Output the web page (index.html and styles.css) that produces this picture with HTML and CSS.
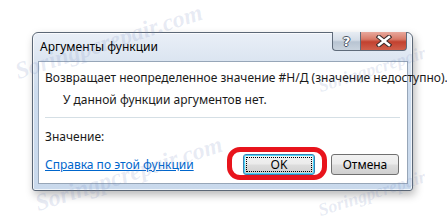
FILE: index.html
```html
<!DOCTYPE html>
<html lang="ru">
<head>
<meta charset="utf-8">
<title>Аргументы функции</title>
<link rel="stylesheet" href="styles.css">
</head>
<body>
<div class="stage">
  <div class="dialog">
    <div class="titlebar">
      <span class="title">Аргументы функции</span>
      <div class="caption-btns">
        <div class="cb help"><span class="qmark">?</span></div>
        <div class="cb close">
          <svg width="16" height="12" viewBox="0 0 16 12" aria-hidden="true">
            <path d="M3 2 L13 10 M13 2 L3 10" stroke="#3a2a2a" stroke-width="4.6" stroke-linecap="square" fill="none"/>
            <path d="M3 2 L13 10 M13 2 L3 10" stroke="#ffffff" stroke-width="2.6" stroke-linecap="square" fill="none"/>
          </svg>
        </div>
      </div>
    </div>
    <div class="client">
      <p class="desc">Возвращает неопределенное значение #Н/Д (значение недоступно).</p>
      <p class="noargs">У данной функции аргументов нет.</p>
      <div class="sep"></div>
      <p class="value">Значение:</p>
      <div class="footer">
        <a class="help-link" href="#">Справка по этой функции</a>
        <div class="btns">
          <button class="btn ok" type="button"><span class="focus">OK</span></button>
          <button class="btn cancel" type="button">Отмена</button>
        </div>
      </div>
    </div>
  </div>
  <div class="highlight"></div>
  <span class="wm wm1">Soringpcrepair.com</span>
  <span class="wm wm2 wm-small">Soringpcrepair</span>
  <span class="wm wm3">Soringpcrepair.com</span>
  <span class="wm wm4 wm-small">Soringpcrepair</span>
</div>
</body>
</html>
```
FILE: styles.css
```css
html, body {
  margin: 0;
  padding: 0;
  background: #ffffff;
}

.stage {
  position: relative;
  width: 447px;
  height: 224px;
  padding: 32px 0 0 32px;
  box-sizing: border-box;
  overflow: hidden;
  font-family: "Noto Sans", "Open Sans", sans-serif;
  font-size: 12px;
  color: #1a1a1a;
}

.dialog {
  width: 381px;
  height: 159px;
  box-sizing: border-box;
  border: 1px solid #5b6776;
  border-radius: 6px 6px 3px 3px;
  background: linear-gradient(#e9eff7 0px, #dbe5f1 28px, #cddcee 60px, #c9d9ec 100%);
  box-shadow: 2px 4px 8px rgba(0, 0, 0, 0.28), inset 0 0 0 1px rgba(255, 255, 255, 0.7);
  display: flex;
  flex-direction: column;
}

.titlebar {
  height: 28px;
  display: flex;
  align-items: flex-start;
  justify-content: space-between;
}

.title {
  padding-left: 7px;
  line-height: 28px;
  color: #000;
  font-size: 12px;
}

.caption-btns {
  display: flex;
  margin-top: -1px;
  margin-right: 5px;
}

.cb {
  height: 19px;
  box-sizing: border-box;
  border: 1px solid #5f6b7a;
  border-top: none;
  display: flex;
  align-items: center;
  justify-content: center;
}

.help {
  width: 28px;
  border-radius: 0 0 0 4px;
  border-right: none;
  background: linear-gradient(#e8edf3 0%, #d5dde7 45%, #b8c4d2 55%, #c9d3de 100%);
}

.qmark {
  font-family: "DejaVu Sans", sans-serif;
  font-weight: bold;
  font-size: 13px;
  color: #ffffff;
  line-height: 1;
  text-shadow: -1px 0 #4a5566, 1px 0 #4a5566, 0 -1px #4a5566, 0 1px #4a5566;
}

.close {
  width: 47px;
  border-radius: 0 0 4px 0;
  background: linear-gradient(#e8a89c 0%, #d87a68 40%, #c2412f 55%, #d0604c 100%);
}

.client {
  margin: 0 4px 6px 5px;
  height: 123px;
  box-sizing: border-box;
  border: 1px solid #97a6b8;
  background: #ffffff;
  padding: 8px 7px 0 6px;
  display: flex;
  flex-direction: column;
}

.client p {
  margin: 0;
  line-height: 16px;
  white-space: nowrap;
}

.noargs {
  margin-top: 6px !important;
  padding-left: 18px;
}

.sep {
  height: 1px;
  background: #d5dfe5;
  margin-top: 9px;
}

.value {
  margin-top: 11px !important;
}

.footer {
  margin-top: 9px;
  display: flex;
  align-items: center;
  justify-content: space-between;
  padding-right: 1px;
}

.help-link {
  color: #0066cc;
  text-decoration: underline;
  line-height: 16px;
}

.btns {
  display: flex;
  gap: 16px;
}

.btn {
  height: 21px;
  box-sizing: border-box;
  border: 1px solid #707070;
  border-radius: 3px;
  background: linear-gradient(#f2f2f2 0%, #ebebeb 48%, #dddddd 52%, #cfcfcf 100%);
  font-family: inherit;
  font-size: 12px;
  color: #000;
  padding: 0;
  display: flex;
  align-items: center;
  justify-content: center;
}

.ok {
  width: 72px;
  border-color: #3c7fb1;
  box-shadow: inset 0 0 0 1px #48d8fb;
  padding: 2px;
}

.focus {
  display: flex;
  align-items: center;
  justify-content: center;
  width: 100%;
  height: 100%;
  box-sizing: border-box;
  border: 1px dotted #000;
}

.cancel {
  width: 68px;
}

.highlight {
  position: absolute;
  left: 227px;
  top: 147px;
  width: 100px;
  height: 33px;
  box-sizing: border-box;
  border: 5px solid #e8141c;
  border-radius: 13px;
}

.wm {
  position: absolute;
  font-family: "Liberation Serif", serif;
  font-style: italic;
  font-weight: bold;
  font-size: 24px;
  color: rgba(110, 130, 185, 0.16);
  transform: rotate(-18deg);
  transform-origin: left bottom;
  white-space: nowrap;
  pointer-events: none;
}

.wm-small {
  font-size: 18px;
}

.wm1 { left: 20px; top: 58px; }
.wm2 { left: 322px; top: 76px; }
.wm3 { left: 40px; top: 190px; }
.wm4 { left: 322px; top: 200px; }
```
